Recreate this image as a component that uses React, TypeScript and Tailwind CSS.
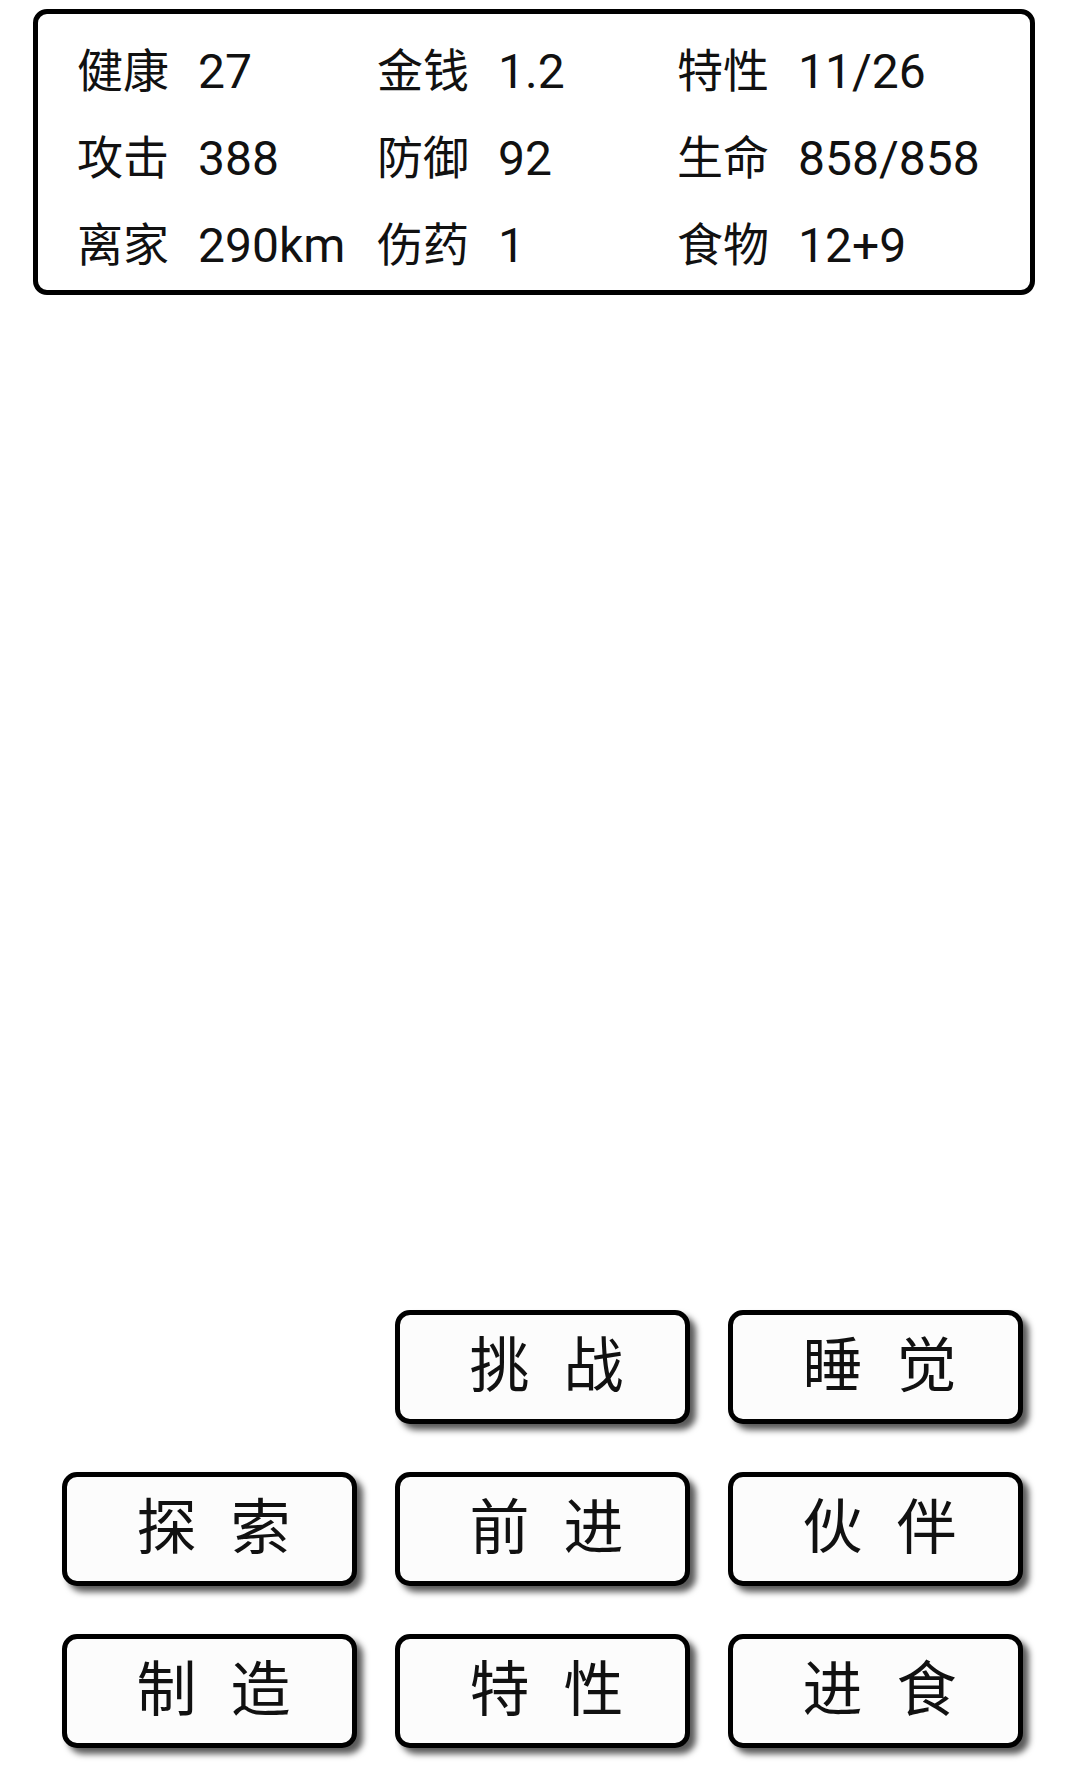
import React from "react";

// Status panel + action buttons of a text survival game screen

const STATS: [string, string][] = [
  ["健康", "27"],
  ["金钱", "1.2"],
  ["特性", "11/26"],
  ["攻击", "388"],
  ["防御", "92"],
  ["生命", "858/858"],
  ["离家", "290km"],
  ["伤药", "1"],
  ["食物", "12+9"],
];

// null = empty slot in the grid
const ACTIONS: (string[] | null)[] = [
  null,
  ["挑", "战"],
  ["睡", "觉"],
  ["探", "索"],
  ["前", "进"],
  ["伙", "伴"],
  ["制", "造"],
  ["特", "性"],
  ["进", "食"],
];

const FONT = { fontFamily: '"Roboto", "Noto Sans CJK SC", sans-serif' };

function ActionButton({ chars }: { chars: string[] }) {
  return (
    <button className="flex h-[114px] items-center justify-center gap-[34px] rounded-[15px] border-[5px] border-black bg-[#fcfcfc] pl-[8px] text-[60px] leading-none text-[#111] shadow-[6px_6px_6px_rgba(0,0,0,0.65)]">
      {chars.map((c, i) => (
        <span key={i}>{c}</span>
      ))}
    </button>
  );
}

export default function App() {
  return (
    <div className="flex h-[1781px] flex-col bg-white" style={FONT}>
      {/* Stats panel */}
      <div className="ml-[33px] mr-[43px] mt-[9px] h-[286px] rounded-[14px] border-[5px] border-black bg-white pl-[39px] pt-[14px]">
        <div className="grid grid-cols-[300px_300px_300px] leading-[87px] text-[#111]">
          {STATS.map(([label, value]) => (
            <div key={label} className="flex items-center whitespace-nowrap">
              <span className="text-[46px]">{label}</span>
              <span className="ml-[29px] text-[48px]">{value}</span>
            </div>
          ))}
        </div>
      </div>

      <div className="flex-1" />

      {/* Action buttons */}
      <div className="grid grid-cols-[295px_295px_295px] gap-x-[38px] gap-y-[48px] pb-[33px] pl-[62px]">
        {ACTIONS.map((a, i) =>
          a ? <ActionButton key={i} chars={a} /> : <div key={i} />
        )}
      </div>
    </div>
  );
}
